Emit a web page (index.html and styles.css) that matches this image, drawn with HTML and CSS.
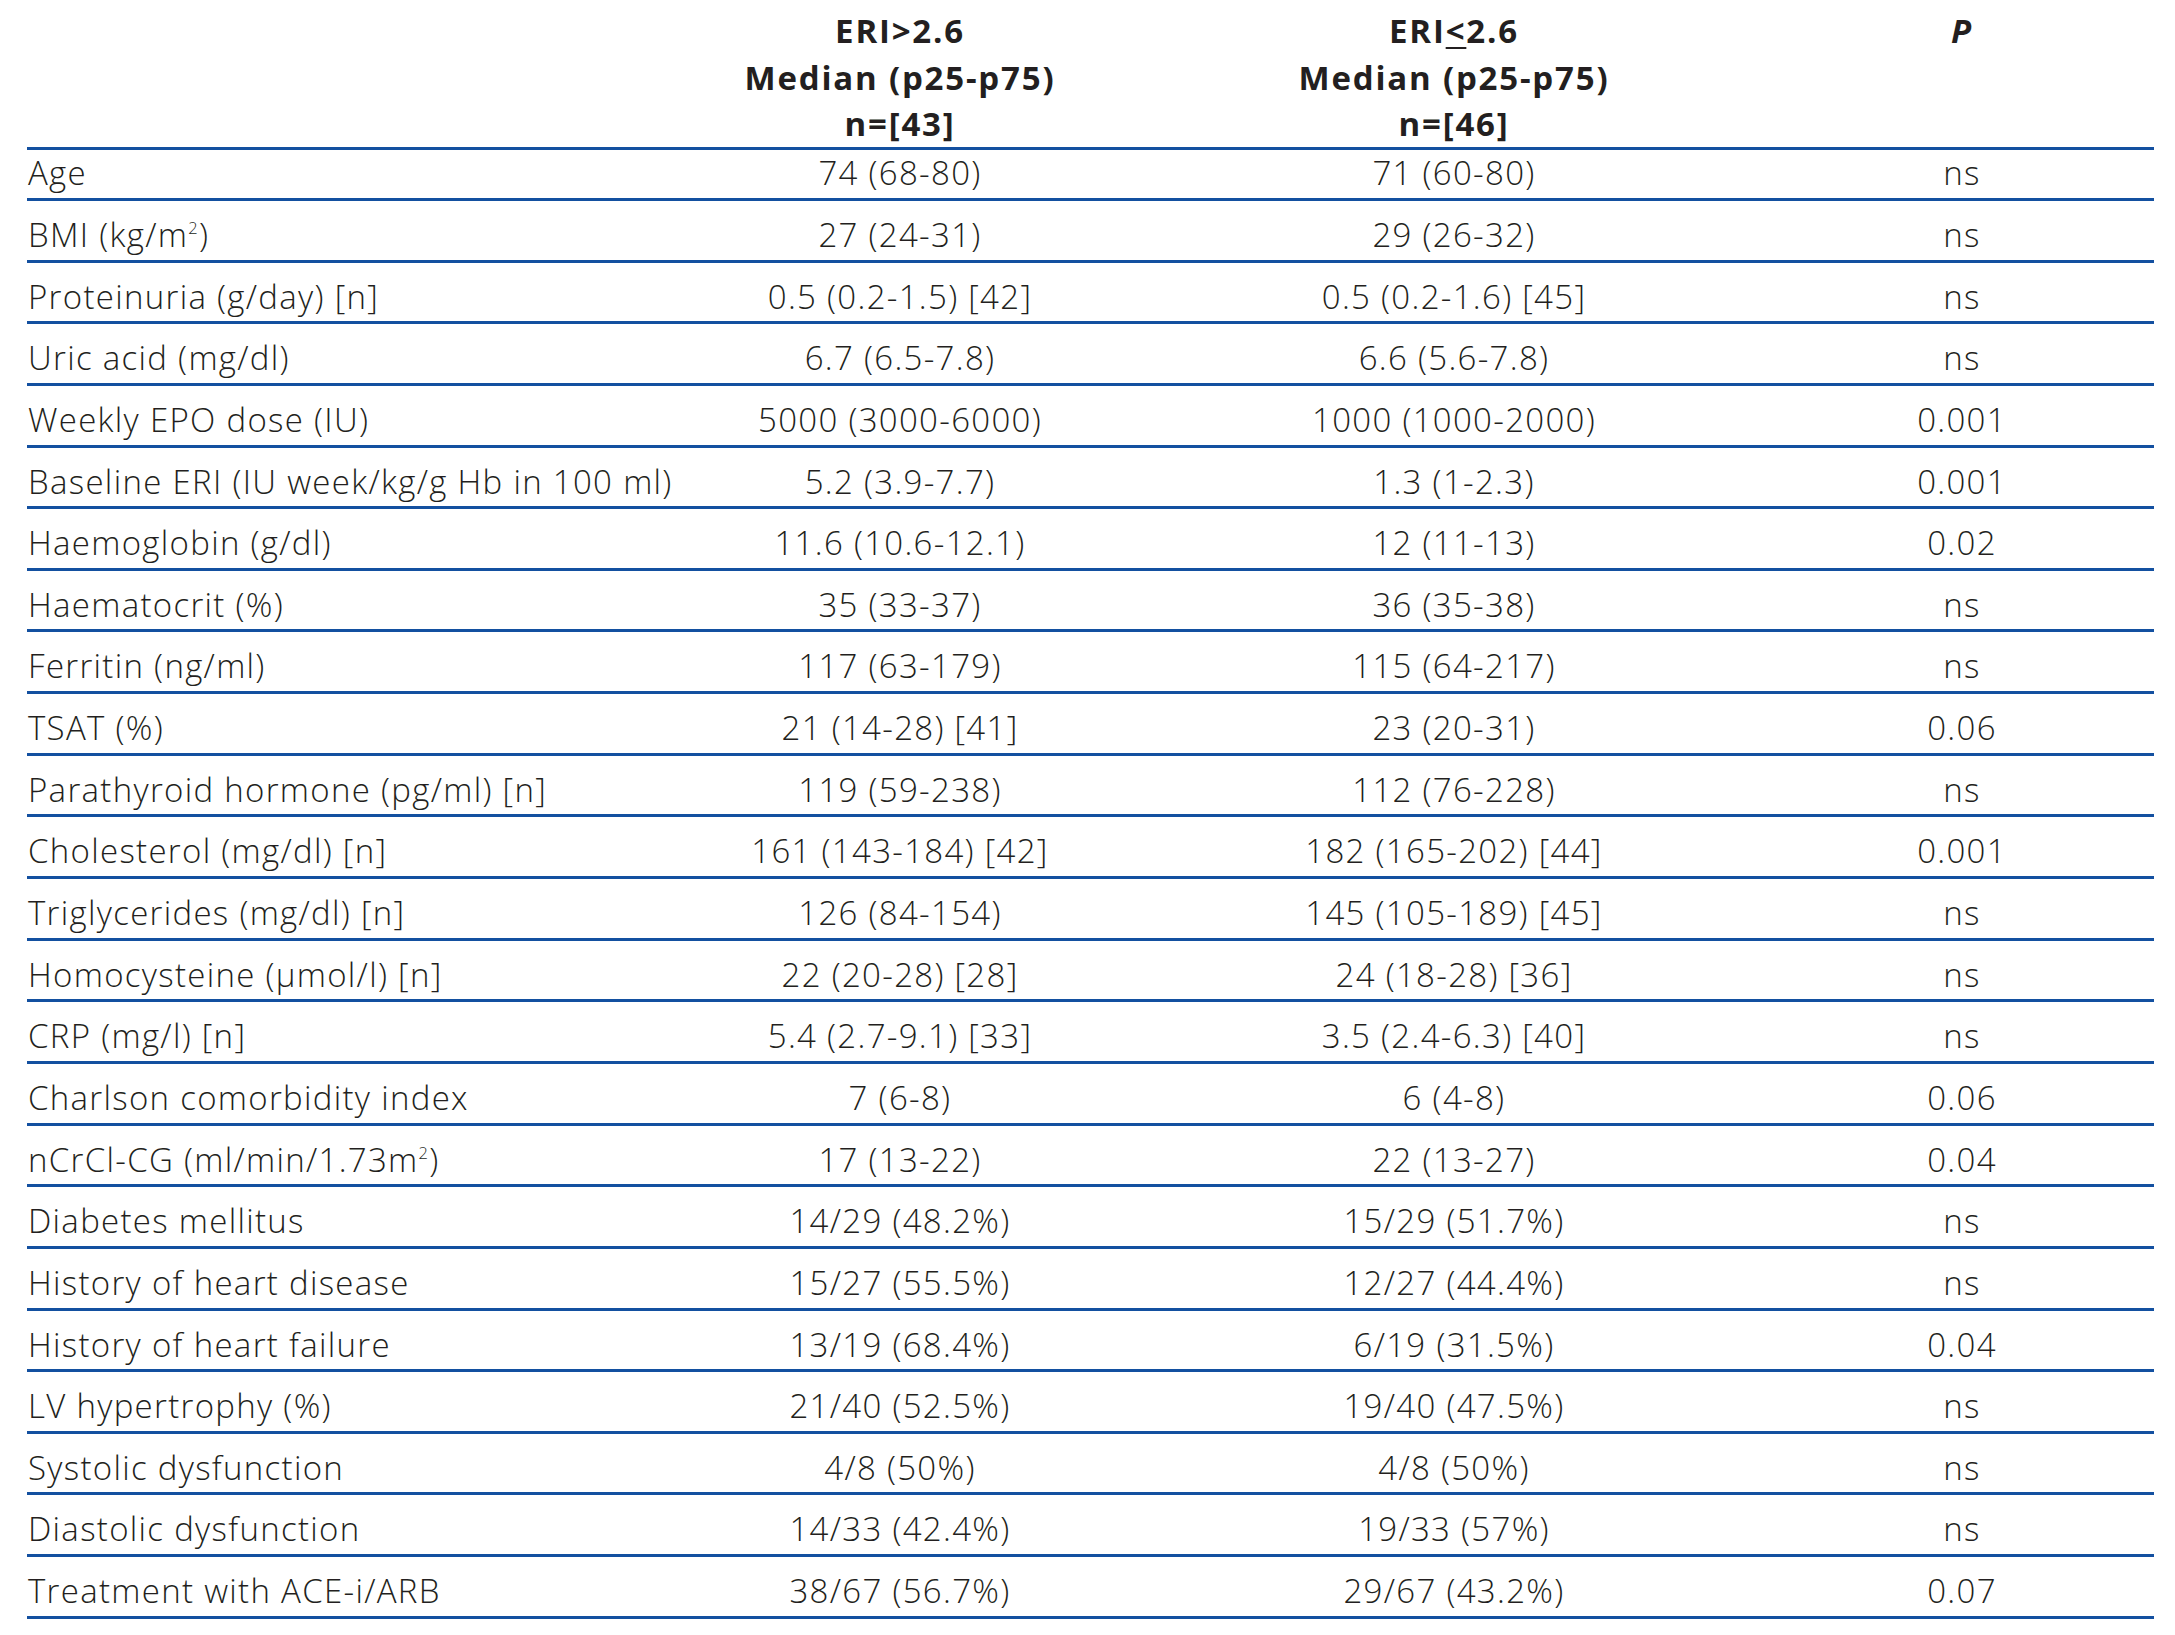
FILE: index.html
```html
<!DOCTYPE html>
<html>
<head>
<meta charset="utf-8">
<link rel="stylesheet" href="styles.css">
</head>
<body>
<div class="table">
  <div class="head">
    <div class="cell label"></div>
    <div class="cell">ERI&gt;2.6<br>Median (p25-p75)<br>n=[43]</div>
    <div class="cell">ERI<span class="ul">&lt;</span>2.6<br>Median (p25-p75)<br>n=[46]</div>
    <div class="cell pcol"><i>P</i></div>
  </div>
  <div class="row first"><div class="label">Age</div><div>74 (68-80)</div><div>71 (60-80)</div><div class="pcol">ns</div></div>
  <div class="row"><div class="label">BMI (kg/m<sup>2</sup>)</div><div>27 (24-31)</div><div>29 (26-32)</div><div class="pcol">ns</div></div>
  <div class="row"><div class="label">Proteinuria (g/day) [n]</div><div>0.5 (0.2-1.5) [42]</div><div>0.5 (0.2-1.6) [45]</div><div class="pcol">ns</div></div>
  <div class="row"><div class="label">Uric acid (mg/dl)</div><div>6.7 (6.5-7.8)</div><div>6.6 (5.6-7.8)</div><div class="pcol">ns</div></div>
  <div class="row"><div class="label">Weekly EPO dose (IU)</div><div>5000 (3000-6000)</div><div>1000 (1000-2000)</div><div class="pcol">0.001</div></div>
  <div class="row"><div class="label">Baseline ERI (IU week/kg/g Hb in 100 ml)</div><div>5.2 (3.9-7.7)</div><div>1.3 (1-2.3)</div><div class="pcol">0.001</div></div>
  <div class="row"><div class="label">Haemoglobin (g/dl)</div><div>11.6 (10.6-12.1)</div><div>12 (11-13)</div><div class="pcol">0.02</div></div>
  <div class="row"><div class="label">Haematocrit (%)</div><div>35 (33-37)</div><div>36 (35-38)</div><div class="pcol">ns</div></div>
  <div class="row"><div class="label">Ferritin (ng/ml)</div><div>117 (63-179)</div><div>115 (64-217)</div><div class="pcol">ns</div></div>
  <div class="row"><div class="label">TSAT (%)</div><div>21 (14-28) [41]</div><div>23 (20-31)</div><div class="pcol">0.06</div></div>
  <div class="row"><div class="label">Parathyroid hormone (pg/ml) [n]</div><div>119 (59-238)</div><div>112 (76-228)</div><div class="pcol">ns</div></div>
  <div class="row"><div class="label">Cholesterol (mg/dl) [n]</div><div>161 (143-184) [42]</div><div>182 (165-202) [44]</div><div class="pcol">0.001</div></div>
  <div class="row"><div class="label">Triglycerides (mg/dl) [n]</div><div>126 (84-154)</div><div>145 (105-189) [45]</div><div class="pcol">ns</div></div>
  <div class="row"><div class="label">Homocysteine (µmol/l) [n]</div><div>22 (20-28) [28]</div><div>24 (18-28) [36]</div><div class="pcol">ns</div></div>
  <div class="row"><div class="label">CRP (mg/l) [n]</div><div>5.4 (2.7-9.1) [33]</div><div>3.5 (2.4-6.3) [40]</div><div class="pcol">ns</div></div>
  <div class="row"><div class="label">Charlson comorbidity index</div><div>7 (6-8)</div><div>6 (4-8)</div><div class="pcol">0.06</div></div>
  <div class="row"><div class="label">nCrCl-CG (ml/min/1.73m<sup>2</sup>)</div><div>17 (13-22)</div><div>22 (13-27)</div><div class="pcol">0.04</div></div>
  <div class="row"><div class="label">Diabetes mellitus</div><div>14/29 (48.2%)</div><div>15/29 (51.7%)</div><div class="pcol">ns</div></div>
  <div class="row"><div class="label">History of heart disease</div><div>15/27 (55.5%)</div><div>12/27 (44.4%)</div><div class="pcol">ns</div></div>
  <div class="row"><div class="label">History of heart failure</div><div>13/19 (68.4%)</div><div>6/19 (31.5%)</div><div class="pcol">0.04</div></div>
  <div class="row"><div class="label">LV hypertrophy (%)</div><div>21/40 (52.5%)</div><div>19/40 (47.5%)</div><div class="pcol">ns</div></div>
  <div class="row"><div class="label">Systolic dysfunction</div><div>4/8 (50%)</div><div>4/8 (50%)</div><div class="pcol">ns</div></div>
  <div class="row"><div class="label">Diastolic dysfunction</div><div>14/33 (42.4%)</div><div>19/33 (57%)</div><div class="pcol">ns</div></div>
  <div class="row"><div class="label">Treatment with ACE-i/ARB</div><div>38/67 (56.7%)</div><div>29/67 (43.2%)</div><div class="pcol">0.07</div></div>
</div>
</body>
</html>
```
FILE: styles.css
```css
html, body {
  margin: 0;
  padding: 0;
  background: #ffffff;
}
body {
  font-family: "Open Sans", "Noto Sans", sans-serif;
  font-size: 33px;
  color: #231f20;
  font-weight: 300;
  letter-spacing: 1.3px;
}
.table {
  margin-left: 27px;
  width: 2127px;
}
.head,
.row {
  display: grid;
  grid-template-columns: 623px 500px 608px 396px;
  text-align: center;
  border-bottom: 3px solid #1350a0;
  box-sizing: border-box;
}
.head {
  font-weight: 700;
  letter-spacing: 1.8px;
  line-height: 46.5px;
  padding-top: 8px;
  height: 150px;
}
.ul {
  text-decoration: underline;
  text-decoration-thickness: 2px;
  text-underline-offset: 4px;
}
.row {
  height: 61.65px;
  line-height: 44px;
  padding-top: 12px;
}
.row.first {
  height: 51px;
  padding-top: 2px;
  line-height: 41px;
}
.label {
  text-align: left;
  padding-left: 1px;
  white-space: nowrap;
}
.pcol {
  padding-left: 12px;
}
sup {
  font-size: 0.5em;
  line-height: 0;
  vertical-align: 0.8em;
}
```
